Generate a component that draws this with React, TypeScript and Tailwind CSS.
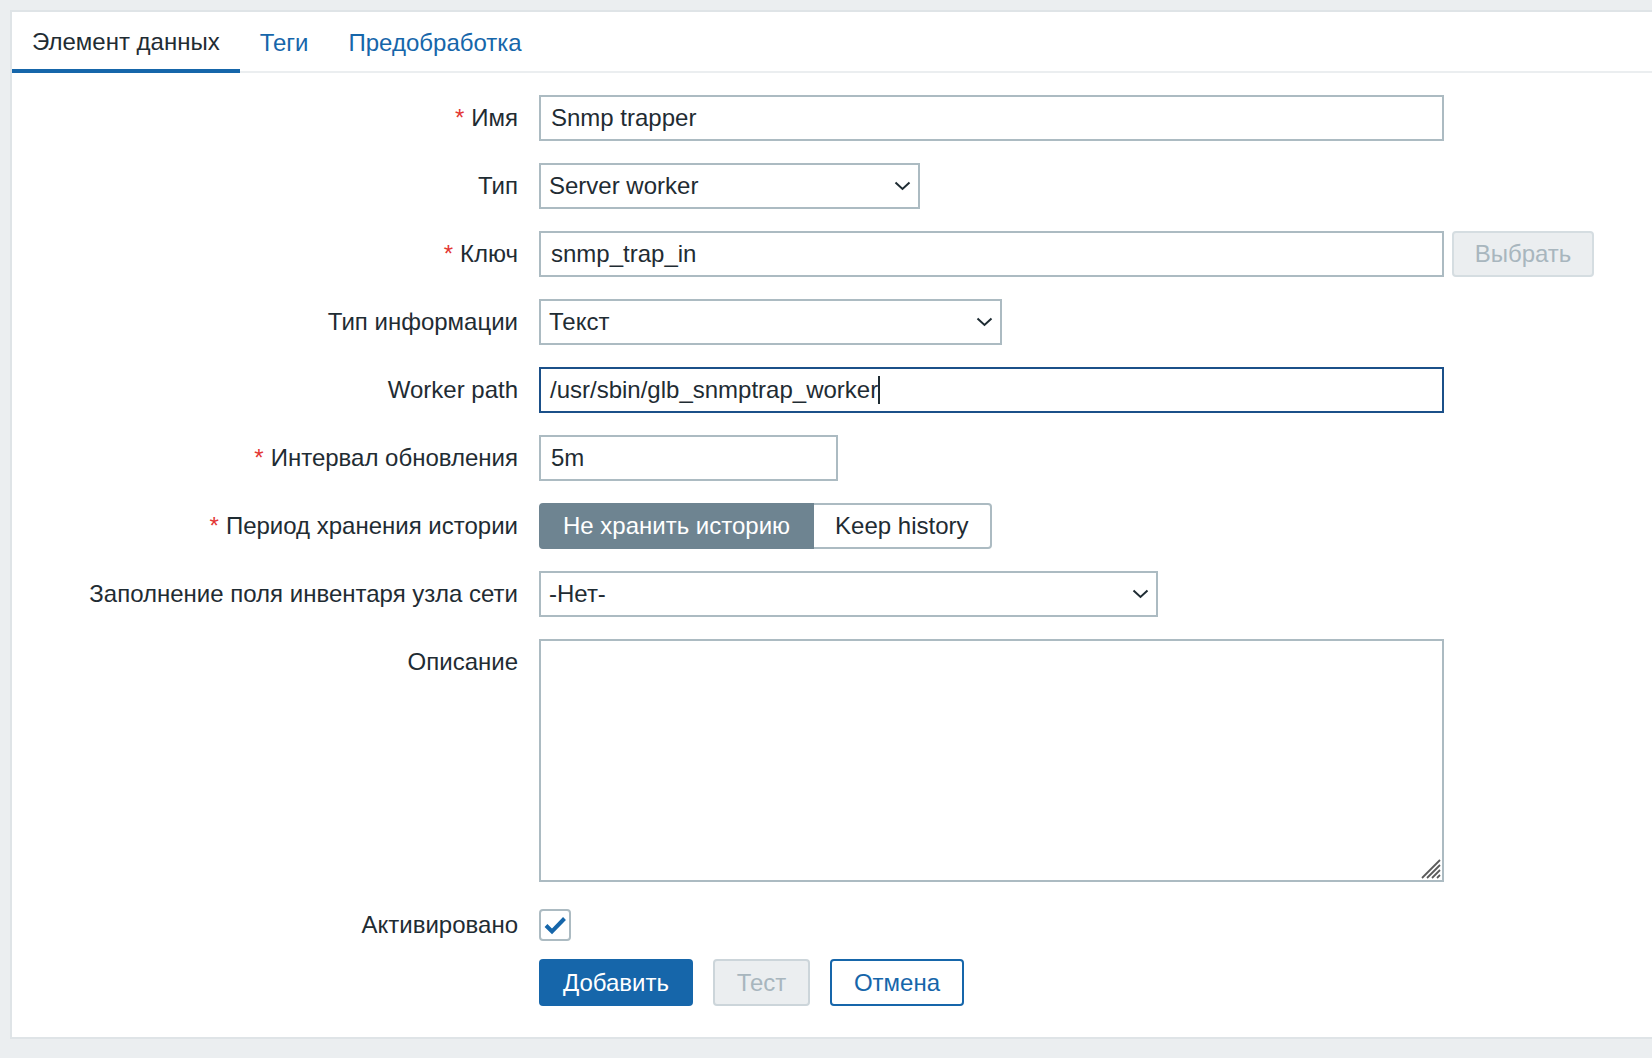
import React from "react";

const font = { fontFamily: '"Liberation Sans", Arial, sans-serif' };

const Chevron = () => (
  <svg width="17" height="10" viewBox="0 0 17 10" className="shrink-0">
    <polyline
      points="1.5,1.5 8.5,8 15.5,1.5"
      fill="none"
      stroke="#1f2c33"
      strokeWidth="2"
    />
  </svg>
);

const Label = ({ text, required }: { text: string; required?: boolean }) => (
  <div className="w-[506px] shrink-0 h-[46px] flex items-center justify-end text-right">
    {required && <span className="text-[#e33734] mr-[7px]">*</span>}
    <span>{text}</span>
  </div>
);

const Row = ({
  label,
  required,
  children,
}: {
  label: string;
  required?: boolean;
  children: React.ReactNode;
}) => (
  <div className="flex items-start gap-[21px]">
    <Label text={label} required={required} />
    {children}
  </div>
);

const TextInput = ({ value, width }: { value: string; width: string }) => (
  <input
    readOnly
    value={value}
    className={`${width} h-[46px] border-2 border-[#acbbc2] bg-white pl-[10px] text-[24px] text-[#1f2c33] outline-none`}
    style={font}
  />
);

const Select = ({ value, width }: { value: string; width: string }) => (
  <div
    className={`${width} h-[46px] border-2 border-[#acbbc2] bg-white pl-[8px] pr-[7px] flex items-center justify-between`}
  >
    <span>{value}</span>
    <Chevron />
  </div>
);

const tabs = ["Элемент данных", "Теги", "Предобработка"];

export default function App() {
  return (
    <div
      className="h-[1058px] overflow-hidden bg-[#ebeef0] pl-[10px] pt-[10px] text-[24px] leading-[28px] text-[#1f2c33]"
      style={font}
    >
      <div className="bg-white border-l-2 border-t-2 border-b-2 border-[#dfe4e7] pb-[31px]">
        {/* tabs */}
        <div className="flex h-[61px] border-b-2 border-[#ebeef0]">
          {tabs.map((t, i) => (
            <div
              key={t}
              className={
                i === 0
                  ? "px-5 pt-[3px] flex items-center border-b-4 border-[#1666aa] -mb-[2px] text-[#1f2c33]"
                  : "px-5 pt-[3px] flex items-center text-[#1666aa]"
              }
            >
              {t}
            </div>
          ))}
        </div>

        {/* form */}
        <div className="flex flex-col gap-[22px] pt-[22px]">
          <Row label="Имя" required>
            <TextInput value="Snmp trapper" width="w-[905px]" />
          </Row>
          <Row label="Тип">
            <Select value="Server worker" width="w-[381px]" />
          </Row>
          <Row label="Ключ" required>
            <div className="flex gap-[8px]">
              <TextInput value="snmp_trap_in" width="w-[905px]" />
              <button
                disabled
                className="w-[142px] h-[46px] rounded-[4px] border-2 border-[#d5dde1] bg-[#ebeef0] text-[#a8b6be]"
              >
                Выбрать
              </button>
            </div>
          </Row>
          <Row label="Тип информации">
            <Select value="Текст" width="w-[463px]" />
          </Row>
          <Row label="Worker path">
            <div className="w-[905px] h-[46px] border-2 border-[#1b5089] bg-white pl-[9px] flex items-center">
              <span>/usr/sbin/glb_snmptrap_worker</span>
              <span className="w-[2px] h-[28px] bg-[#1f2c33]" />
            </div>
          </Row>
          <Row label="Интервал обновления" required>
            <TextInput value="5m" width="w-[299px]" />
          </Row>
          <Row label="Период хранения истории" required>
            <div className="flex h-[46px]">
              <div className="h-full px-[22px] flex items-center bg-[#6e8491] border-2 border-[#6e8491] rounded-l-[4px] text-white">
                Не хранить историю
              </div>
              <div className="h-full px-[21px] flex items-center bg-white border-2 border-l-0 border-[#acbbc2] rounded-r-[4px]">
                Keep history
              </div>
            </div>
          </Row>
          <Row label="Заполнение поля инвентаря узла сети">
            <Select value="-Нет-" width="w-[619px]" />
          </Row>
          <Row label="Описание">
            <div className="relative">
              <textarea
                readOnly
                className="block w-[905px] h-[243px] border-2 border-[#acbbc2] bg-white outline-none resize-none"
              />
              {/* resize grip */}
              <svg
                width="20"
                height="20"
                viewBox="0 0 20 20"
                className="absolute right-[3px] bottom-[3px]"
              >
                <g stroke="#5a5a5a" strokeWidth="1.8">
                  <line x1="1" y1="19" x2="19" y2="1" />
                  <line x1="6" y1="19" x2="19" y2="6" />
                  <line x1="11" y1="19" x2="19" y2="11" />
                  <line x1="16" y1="19" x2="19" y2="16" />
                </g>
              </svg>
            </div>
          </Row>

          <div className="flex flex-col gap-[11px] -mt-[2px]">
            <Row label="Активировано">
              <div className="h-[46px] flex items-center">
                <div className="w-[32px] h-[32px] border-2 border-[#acbbc2] rounded-[4px] bg-white flex items-center justify-center">
                  <svg width="28" height="28" viewBox="0 0 28 28">
                    <polyline
                      points="5,14.5 11,20.5 23.5,7.5"
                      fill="none"
                      stroke="#1666aa"
                      strokeWidth="4"
                    />
                  </svg>
                </div>
              </div>
            </Row>
            <div className="flex gap-[20px] pl-[527px]">
              <button className="w-[154px] h-[47px] rounded-[4px] bg-[#1666aa] text-white">
                Добавить
              </button>
              <button
                disabled
                className="w-[97px] h-[47px] rounded-[4px] border-2 border-[#ccd5da] bg-[#ebeef0] text-[#a8b6be]"
              >
                Тест
              </button>
              <button className="w-[134px] h-[47px] rounded-[4px] border-2 border-[#1666aa] bg-white text-[#1666aa]">
                Отмена
              </button>
            </div>
          </div>
        </div>
      </div>
    </div>
  );
}
